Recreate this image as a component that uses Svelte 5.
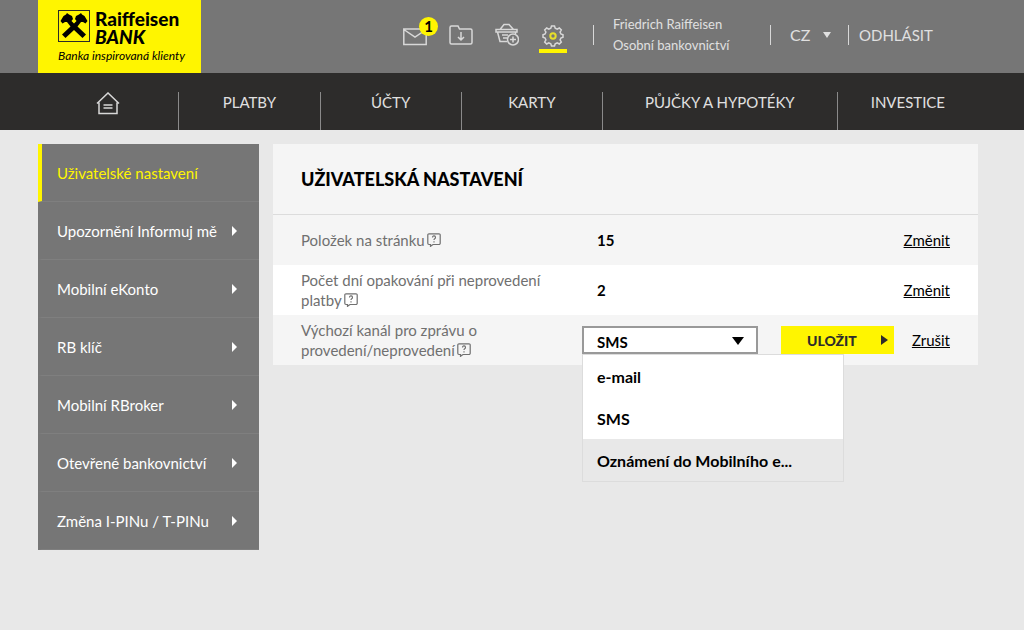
<script>
  const mainMenu = ['PLATBY', 'ÚČTY', 'KARTY', 'PŮJČKY A HYPOTÉKY', 'INVESTICE'];

  const sideMenu = [
    'Uživatelské nastavení',
    'Upozornění Informuj mě',
    'Mobilní eKonto',
    'RB klíč',
    'Mobilní RBroker',
    'Otevřené bankovnictví',
    'Změna I-PINu / T-PINu'
  ];

  const settings = [
    { label: 'Položek na stránku', value: '15' },
    { label: 'Počet dní opakování při neprovedení platby', value: '2' }
  ];

  const channels = ['e-mail', 'SMS', 'Oznámení do Mobilního e...'];

  let activeItem = $state(0);
  let channel = $state('SMS');
  let highlighted = $state(2);
  let open = $state(true);

  function choose(name) {
    channel = name;
    open = false;
  }

  // the native list stays closed, our own list is shown instead
  function toggleList(e) {
    e.preventDefault();
    open = !open;
  }
</script>

{#snippet help()}
  <button class="help" type="button" aria-label="Nápověda">
    <svg width="14" height="14" viewBox="0 0 14 14">
      <path d="M3.500 11.500H2A1.200 1.200 0 0 1 .8 10.300V2A1.200 1.200 0 0 1 2 .8H12A1.200 1.200 0 0 1 13.200 2V10.300A1.200 1.200 0 0 1 12 11.500H6L3.500 13.300Z" />
      <path d="M5.500 4.400A1.500 1.500 0 1 1 7.700 5.700C7.200 6 7 6.300 7 7M7 8.300V9.400" />
    </svg>
  </button>
{/snippet}

<header class="topbar">
  <a class="logo" href="#home">
    <span class="logo-row">
      <svg width="32" height="32" viewBox="0 0 32 32">
        <rect x=".5" y=".5" width="31" height="31" fill="none" stroke="#2b2a29" />
        <path d="M2.500 11L5.500 6L8 4.500L9 3L11 4.500L14 6L15 9L13.500 11L16 13.500L18.500 11L17 9L18 6L21 4.500L23 3L24 4.500L26.500 6L29.500 11L27.500 13.500L25 12L23 12L19.500 16.500L28 24.500L24.500 28L16 20L7.500 28L4 24.500L12.500 16.500L9 12L7 12L4.500 13.500Z" />
      </svg>
      <span class="logo-name">
        <span>Raiffeisen</span>
        <em>BANK</em>
      </span>
    </span>
    <span class="claim">Banka inspirovaná klienty</span>
  </a>

  <div class="tools">
    <a class="tool" href="#zpravy" aria-label="Zprávy">
      <svg width="24" height="24" viewBox="0 0 24 24">
        <path d="M.8 6H23.200V21.500H.8ZM.8 6.500L12 14L23.200 6.500" />
      </svg>
      <span class="badge">1</span>
    </a>
    <a class="tool" href="#dokumenty" aria-label="Dokumenty">
      <svg width="24" height="24" viewBox="0 0 24 24">
        <path d="M1 4.500Q1 3 2.500 3H9L10.500 6H21.500Q23 6 23 7.500V19.500Q23 21 21.500 21H2.500Q1 21 1 19.500ZM12 9V17M9 14L12 17L15 14" />
      </svg>
    </a>
    <a class="tool" href="#kosik" aria-label="Košík">
      <svg width="24" height="24" viewBox="0 0 24 24">
        <path d="M1 6.500H22V9H1ZM2.500 9L5 18.500H12M20.500 9V11M5 6.500L9 1.500H14L18.500 6.500M7 12H13M8 15H12" />
        <circle cx="18" cy="16.500" r="5.500" />
        <path d="M18 13.500V19.500M15 16.500H21" />
      </svg>
    </a>
    <a class="tool current" href="#nastaveni" aria-label="Nastavení">
      <svg width="24" height="24" viewBox="0 0 24 24">
        <path d="M10.500 3H13.500L14.200 5.300L16.200 6.200L18.300 5L20.300 7L19.100 9.100L19.900 11L22 11.700V14.300L19.900 15L19.100 16.900L20.300 19L18.300 21L16.200 19.800L14.200 20.700L13.500 23H10.500L9.800 20.700L7.800 19.800L5.700 21L3.700 19L4.900 16.900L4.100 15L2 14.300V11.700L4.100 11L4.900 9.100L3.700 7L5.700 5L7.800 6.200L9.800 5.300Z" />
        <circle class="gear-hole" cx="12" cy="13" r="2.700" />
      </svg>
    </a>
  </div>

  <div class="user">
    <div>Friedrich Raiffeisen<br />Osobní bankovnictví</div>
  </div>

  <div class="lang">
    <select aria-label="Jazyk">
      <option>CZ</option>
      <option>EN</option>
    </select>
    <svg width="8" height="6" viewBox="0 0 8 6"><path d="M0 0H8L4 6Z" /></svg>
  </div>

  <a class="logout" href="#odhlasit">ODHLÁSIT</a>
</header>

<nav class="mainmenu">
  <a href="#home" aria-label="Domů">
    <svg width="24" height="24" viewBox="0 0 24 24">
      <path d="M1 11.500L12 1L23 11.500M3 10.500V21.500H21V10.500M7.500 13H16.500M7.500 16H16.500" />
    </svg>
  </a>
  {#each mainMenu as item}
    <a class:wide={item.length > 12} href="#menu">{item}</a>
  {/each}
</nav>

<div class="page">
  <nav class="sidemenu">
    {#each sideMenu as item, i}
      <a href="#sekce" class:active={i === activeItem} onclick={() => (activeItem = i)}>
        {item}
        {#if i !== activeItem}
          <svg width="5" height="10" viewBox="0 0 5 10"><path d="M0 0L5 5L0 10Z" /></svg>
        {/if}
      </a>
    {/each}
  </nav>

  <main>
    <h1>UŽIVATELSKÁ NASTAVENÍ</h1>

    {#each settings as s}
      <div class="row">
        <div class="label">{s.label}{@render help()}</div>
        <div class="value">{s.value}</div>
        <a class="action" href="#zmenit">Změnit</a>
      </div>
    {/each}

    <div class="row">
      <div class="label">
        <label for="channel">Výchozí kanál pro zprávu o provedení/neprovedení</label>{@render help()}
      </div>
      <div class="edit">
        <div class="dropdown">
          <select id="channel" bind:value={channel} onmousedown={toggleList}>
            {#each channels as c}
              <option value={c}>{c}</option>
            {/each}
          </select>
          <svg class="caret" width="12" height="8" viewBox="0 0 12 8"><path d="M0 0H12L6 8Z" /></svg>
          {#if open}
            <div class="list">
              {#each channels as c, i}
                <button
                  type="button"
                  class:highlighted={i === highlighted}
                  onmouseenter={() => (highlighted = i)}
                  onclick={() => choose(c)}>{c}</button>
              {/each}
            </div>
          {/if}
        </div>
        <button class="save" type="button">
          ULOŽIT
          <svg width="7" height="10" viewBox="0 0 7 10"><path d="M0 0L7 5L0 10Z" /></svg>
        </button>
      </div>
      <a class="action" href="#zrusit">Zrušit</a>
    </div>
  </main>
</div>

<style>
  :global(body) {
    background: #e8e8e8;
    font-family: Lato, 'Liberation Sans', sans-serif;
    font-size: 15px;
    line-height: 20px;
    color: #000;
  }
  a {
    color: inherit;
    text-decoration: none;
  }
  button,
  select {
    font-family: inherit;
    color: inherit;
    border: 0;
    border-radius: 0;
    margin: 0;
    cursor: pointer;
  }
  select {
    appearance: none;
  }

  .topbar {
    display: flex;
    align-items: center;
    height: 70px;
    padding: 0 46px 3px 38px;
    background: #767676;
    color: #e0e0e0;
    white-space: nowrap;
  }
  .logo {
    align-self: flex-start;
    box-sizing: border-box;
    width: 163px;
    height: 73px;
    padding: 10px 0 0 20px;
    background: #fff500;
    color: #000;
  }
  .logo-row {
    display: flex;
    gap: 5px;
    height: 36px;
  }
  .logo-name {
    display: flex;
    flex-direction: column;
    font-size: 19px;
    font-weight: 900;
    line-height: 18px;
  }
  .claim {
    display: block;
    font-size: 12px;
    font-style: italic;
    line-height: 20px;
  }

  .tools {
    display: flex;
    gap: 18px;
    margin-left: auto;
  }
  .tool {
    position: relative;
    box-sizing: border-box;
    width: 28px;
    height: 36px;
    padding: 6px 2px 0;
  }
  .tool svg,
  .mainmenu svg {
    display: block;
    fill: none;
    stroke: #d8d8d8;
    stroke-width: 1.5;
  }
  .tool.current {
    border-bottom: 4px solid #fff500;
  }
  .tool .gear-hole {
    stroke: #e6de2a;
    stroke-width: 2;
  }
  .badge {
    position: absolute;
    top: 0;
    right: -9px;
    width: 19px;
    height: 19px;
    border-radius: 50%;
    background: #fff500;
    color: #000;
    font-size: 15px;
    font-weight: 700;
    line-height: 19px;
    text-align: center;
  }
  .user,
  .lang,
  .logout {
    display: flex;
    align-items: center;
  }
  .user::before,
  .lang::before,
  .logout::before {
    content: '';
    flex: none;
    width: 1px;
    height: 20px;
    background: #d8d8d8;
  }
  .user {
    gap: 19px;
    width: 177px;
    margin-left: 26px;
    font-size: 13px;
    line-height: 21px;
  }
  .lang {
    width: 78px;
  }
  .lang select {
    width: 33px;
    margin-left: 19px;
    padding: 0;
    background: none;
    font-size: 16px;
    line-height: 20px;
  }
  .lang svg {
    fill: #e0e0e0;
  }
  .logout {
    gap: 10px;
    width: 130px;
  }

  .mainmenu {
    display: flex;
    height: 57px;
    padding: 0 46px 0 38px;
    background: #2d2c2b;
    color: #e0e0e0;
  }
  .mainmenu a {
    flex: 3;
    display: flex;
    justify-content: center;
    box-sizing: border-box;
    margin-top: 19px;
    border-right: 1px solid #8a8a8a;
    white-space: nowrap;
  }
  .mainmenu a.wide {
    flex: 5;
  }
  .mainmenu a:last-child {
    border-right: 0;
  }

  .page {
    display: flex;
    align-items: flex-start;
    gap: 14px;
    padding: 14px 46px 40px 38px;
  }
  .sidemenu {
    flex: none;
    width: 221px;
    background: #767676;
    color: #fff;
  }
  .sidemenu a {
    display: flex;
    align-items: center;
    justify-content: space-between;
    box-sizing: border-box;
    height: 58px;
    padding: 0 22px 0 15px;
    border-left: 4px solid transparent;
    border-bottom: 1px solid #7f7f7f;
  }
  .sidemenu a.active {
    border-left-color: #fff500;
    color: #fff500;
  }
  .sidemenu svg {
    fill: #fff;
  }

  main {
    flex: 1;
    min-width: 0;
    background: #f5f5f5;
  }
  h1 {
    margin: 0;
    padding: 25px 28px;
    border-bottom: 1px solid #dcdcdc;
    font-size: 18px;
    font-weight: 900;
    line-height: 20px;
  }
  .row {
    display: grid;
    grid-template-columns: 281px 1fr auto;
    align-items: center;
    min-height: 50px;
    padding: 0 28px;
  }
  .row:nth-child(odd) {
    background: #fff;
  }
  .label {
    padding-right: 30px;
    color: #707070;
  }
  .help {
    height: 14px;
    margin-left: 2px;
    padding: 0;
    background: none;
    vertical-align: -1px;
  }
  .help svg {
    display: block;
    fill: none;
    stroke: #707070;
    stroke-width: 1.2;
  }
  .value {
    padding-left: 15px;
    font-weight: 700;
  }
  .action {
    text-decoration: underline;
  }
  .edit {
    display: flex;
    gap: 23px;
  }
  .dropdown {
    position: relative;
    width: 176px;
  }
  .dropdown select {
    width: 100%;
    height: 28px;
    padding: 4px 30px 0 13px;
    border: 2px solid #999;
    background: #fff;
    font-size: 15px;
    font-weight: 700;
  }
  .caret {
    position: absolute;
    top: 11px;
    right: 14px;
    pointer-events: none;
  }
  .list {
    position: absolute;
    top: 28px;
    left: 0;
    width: 260px;
    border: 1px solid #dcdcdc;
    background: #fff;
  }
  .list button {
    display: block;
    width: 100%;
    height: 42px;
    padding: 0 14px;
    background: none;
    font-size: 16px;
    font-weight: 700;
    text-align: left;
  }
  .list button.highlighted {
    background: #e8e8e8;
  }
  .save {
    display: flex;
    align-items: center;
    justify-content: space-between;
    width: 113px;
    height: 28px;
    padding: 0 6px 0 26px;
    background: #fff500;
    color: #2d2c2b;
    font-size: 14px;
    font-weight: 900;
  }
  .save svg {
    fill: #2d2c2b;
  }
</style>
